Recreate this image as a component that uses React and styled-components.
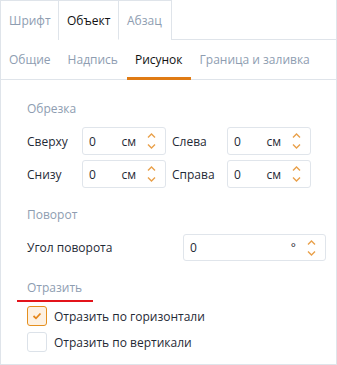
import React from "react";
import styled, { createGlobalStyle } from "styled-components";

const Global = createGlobalStyle`
  html, body { margin: 0; padding: 0; background: #fff; }
  body { font-family: "Open Sans", "Noto Sans", sans-serif; font-size: 12px; color: #1f2a36; }
  * { box-sizing: border-box; }
`;

const Panel = styled.div`
  width: 337px;
  height: 365px;
  border-left: 1px solid #dfe4ea;
  border-right: 1px solid #dfe4ea;
  border-bottom: 1px solid #dfe4ea;
  display: flex;
  flex-direction: column;
`;

const TabBar = styled.div`
  display: flex;
  height: 40px;
  border-bottom: 1px solid #dfe4ea;
`;

const Tab = styled.div`
  display: flex;
  align-items: center;
  padding: 0 8px;
  height: 40px;
  border-top: 1px solid #dfe4ea;
  border-right: 1px solid #dfe4ea;
  background: #fff;
  color: ${(p) => (p.$active ? "#111" : "#8e9db1")};
  border-bottom: ${(p) => (p.$active ? "1px solid #fff" : "none")};
  width: ${(p) => p.$w}px;
`;

const SubBar = styled.div`
  display: flex;
  height: 40px;
  border-bottom: 1px solid #dfe4ea;
`;

const SubTab = styled.div`
  position: relative;
  display: flex;
  align-items: center;
  padding: 0 8px;
  margin-right: 1px;
  color: ${(p) => (p.$active ? "#111" : "#8e9db1")};
  &::after {
    content: "";
    display: ${(p) => (p.$active ? "block" : "none")};
    position: absolute;
    left: 0;
    right: 0;
    bottom: -1px;
    height: 3px;
    background: #e07b14;
  }
`;

const Content = styled.div`
  padding: 20px 0 0 26px;
`;

const SectionTitle = styled.div`
  color: #8e9db1;
  height: 18px;
  line-height: 18px;
  position: relative;
  display: inline-block;
`;

const RedMark = styled.div`
  position: absolute;
  left: -10px;
  width: 76px;
  top: 21px;
  height: 2px;
  background: #e3141b;
`;

const CropGrid = styled.div`
  display: grid;
  grid-template-columns: 49px 84px 49px 84px;
  column-gap: 6px;
  row-gap: 5px;
  margin-top: 9px;
  align-items: center;
`;

const Label = styled.div`
  color: #1f2a36;
  white-space: nowrap;
`;

const Field = styled.div`
  display: flex;
  align-items: center;
  height: ${(p) => p.$h || 28}px;
  width: ${(p) => p.$w || 84}px;
  border: 1px solid #e0e5eb;
  border-radius: 3px;
  padding: 0 9px 0 6px;
`;

const Value = styled.div`
  flex: 1;
  color: #1f2a36;
`;

const Unit = styled.div`
  margin-right: 11px;
  color: #1f2a36;
`;

const RotRow = styled.div`
  display: flex;
  align-items: center;
  justify-content: space-between;
  width: 299px;
  margin-top: 10px;
`;

const Section = styled.div`
  margin-top: ${(p) => p.$mt}px;
`;

const CheckList = styled.div`
  display: flex;
  flex-direction: column;
  gap: 6px;
  margin-top: 9px;
`;

const CheckRow = styled.label`
  display: flex;
  align-items: center;
  gap: 7px;
  color: #1f2a36;
`;

const Box = styled.span`
  width: 20px;
  height: 20px;
  border-radius: 3px;
  border: 1px solid ${(p) => (p.$on ? "#e5901f" : "#dce2e9")};
  background: ${(p) => (p.$on ? "#fdf1e3" : "#fff")};
  display: flex;
  align-items: center;
  justify-content: center;
`;

const Spinner = () => (
  <svg width="9" height="18" viewBox="0 0 9 18">
    <path d="M1 5.5 L4.5 2 L8 5.5" fill="none" stroke="#e9a04a" strokeWidth="1.4" />
    <path d="M1 12.5 L4.5 16 L8 12.5" fill="none" stroke="#e9a04a" strokeWidth="1.4" />
  </svg>
);

const CmField = () => (
  <Field>
    <Value>0</Value>
    <Unit>см</Unit>
    <Spinner />
  </Field>
);

export default function App() {
  return (
    <>
      <Global />
      <Panel>
        <TabBar>
          <Tab $w={58}>Шрифт</Tab>
          <Tab $w={60} $active>Объект</Tab>
          <Tab $w={53}>Абзац</Tab>
        </TabBar>
        <SubBar>
          <SubTab>Общие</SubTab>
          <SubTab>Надпись</SubTab>
          <SubTab $active>Рисунок</SubTab>
          <SubTab>Граница и заливка</SubTab>
        </SubBar>
        <Content>
          <SectionTitle>Обрезка</SectionTitle>
          <CropGrid>
            <Label>Сверху</Label>
            <CmField />
            <Label>Слева</Label>
            <CmField />
            <Label>Снизу</Label>
            <CmField />
            <Label>Справа</Label>
            <CmField />
          </CropGrid>
          <Section $mt={18}>
            <SectionTitle>Поворот</SectionTitle>
            <RotRow>
              <Label>Угол поворота</Label>
              <Field $w={143} $h={27}>
                <Value>0</Value>
                <Unit>°</Unit>
                <Spinner />
              </Field>
            </RotRow>
          </Section>
          <Section $mt={18}>
            <SectionTitle>
              Отразить
              <RedMark />
            </SectionTitle>
            <CheckList>
              <CheckRow>
                <Box $on>
                  <svg width="10" height="8" viewBox="0 0 10 8">
                    <path d="M1.5 4 L4 6.3 L8.5 1.5" fill="none" stroke="#e5851a" strokeWidth="1.8" />
                  </svg>
                </Box>
                Отразить по горизонтали
              </CheckRow>
              <CheckRow>
                <Box />
                Отразить по вертикали
              </CheckRow>
            </CheckList>
          </Section>
        </Content>
      </Panel>
    </>
  );
}
